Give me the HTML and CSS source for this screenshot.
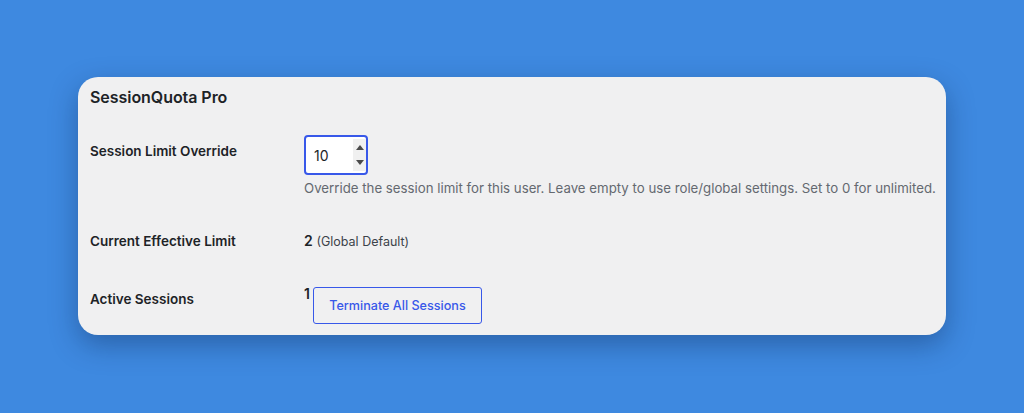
FILE: index.html
```html
<!DOCTYPE html>
<html lang="en">
<head>
<meta charset="utf-8">
<title>SessionQuota Pro</title>
<link rel="stylesheet" href="styles.css">
</head>
<body>
<div class="card">
  <h2 class="title">SessionQuota Pro</h2>
  <div class="row row-override">
    <div class="label">Session Limit Override</div>
    <div class="value">
      <div class="num-field">
        <input class="num-input" type="text" value="10" aria-label="Session Limit Override">
        <div class="spinner">
          <svg width="10" height="28" viewBox="0 0 10 28"><path d="M1 9 L5 4 L9 9 Z" fill="#4a4a4a"/><path d="M1 19 L5 24 L9 19 Z" fill="#4a4a4a"/></svg>
        </div>
      </div>
      <p class="desc">Override the session limit for this user. Leave empty to use role/global settings. Set to 0 for unlimited.</p>
    </div>
  </div>
  <div class="row row-effective">
    <div class="label">Current Effective Limit</div>
    <div class="value"><strong>2</strong> <span class="muted">(Global Default)</span></div>
  </div>
  <div class="row row-active">
    <div class="label">Active Sessions</div>
    <div class="value value-active"><strong>1</strong><button class="btn" type="button">Terminate All Sessions</button></div>
  </div>
</div>
</body>
</html>
```
FILE: styles.css
```css
html, body {
  margin: 0;
  padding: 0;
}
body {
  background: #3e89e0;
  font-family: Inter, "Noto Sans", "Liberation Sans", sans-serif;
  color: #1d2327;
  padding: 77px 78px 0 78px;
  height: 413px;
  box-sizing: border-box;
  overflow: hidden;
}
.card {
  background: #f0f0f1;
  border-radius: 20px;
  width: 868px;
  height: 258px;
  box-sizing: border-box;
  padding: 10px 12px 12px 12px;
  box-shadow: 0 10px 28px rgba(10, 30, 70, 0.35);
}
.title {
  margin: 0;
  font-size: 16px;
  line-height: 20px;
  font-weight: 600;
  letter-spacing: -0.05px;
}
.row {
  display: grid;
  grid-template-columns: 214px 1fr;
}
.label {
  font-size: 13.5px;
  font-weight: 600;
  line-height: 20px;
}
.row-override {
  margin-top: 28px;
}
.row-override .label {
  padding-top: 6px;
}
.num-field {
  width: 64px;
  height: 40px;
  box-sizing: border-box;
  border: 2px solid #3858e9;
  border-radius: 4px;
  background: #fff;
  display: flex;
  align-items: stretch;
}
.num-input {
  width: 39px;
  border: none;
  outline: none;
  padding: 0 0 0 8px;
  margin: 0;
  font-family: inherit;
  font-size: 14px;
  color: #1d2327;
  background: transparent;
}
.spinner {
  width: 15px;
  margin: 2px 0;
  background: #f0f0f0;
  display: flex;
  align-items: center;
  justify-content: center;
}
.desc {
  margin: 3px 0 0 0;
  font-size: 13.25px;
  line-height: 20px;
  color: #646970;
  white-space: nowrap;
}
.row-effective {
  margin-top: 33px;
}
.value {
  font-size: 13px;
  line-height: 20px;
}
.value strong {
  font-size: 14px;
  font-weight: 600;
}
.muted {
  font-size: 12.5px;
  color: #3c434a;
}
.row-active {
  margin-top: 32px;
}
.row-active .label {
  padding-top: 5px;
}
.value-active {
  display: flex;
  align-items: flex-start;
}
.btn {
  margin: 3px 0 0 3px;
  width: 169px;
  height: 37px;
  border: 1px solid #3858e9;
  border-radius: 3px;
  background: transparent;
  color: #3858e9;
  font-family: inherit;
  font-size: 12.6px;
  font-weight: 500;
  padding: 0;
  cursor: pointer;
}
```
